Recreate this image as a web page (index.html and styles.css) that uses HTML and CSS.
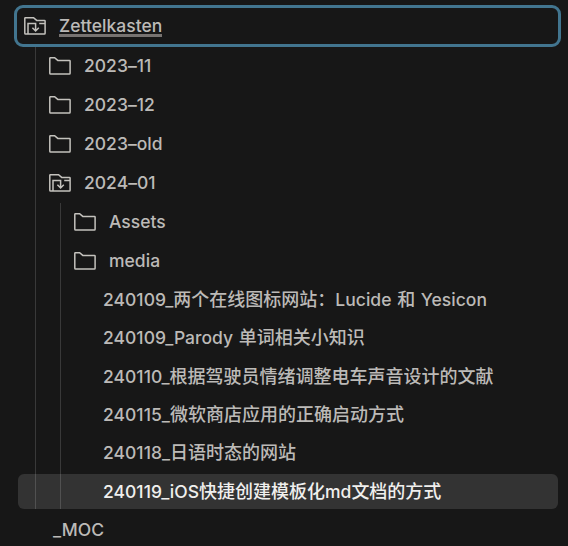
FILE: index.html
```html
<!DOCTYPE html>
<html lang="zh-CN">
<head>
<meta charset="utf-8">
<title>Zettelkasten</title>
<link rel="stylesheet" href="styles.css">
</head>
<body>
<svg class="defs" aria-hidden="true">
  <symbol id="folder" viewBox="0 0 22 18">
    <path d="M1.5.7H5.6L8.8 3.4H20.4Q21.1 3.4 21.1 4.1V16.3Q21.1 17.1 20.4 17.1H1.6Q.8 17.1.8 16.3V1.4Q.8.7 1.5.7Z"/>
  </symbol>
  <symbol id="folder-open" viewBox="0 0 22 18">
    <path d="M1.5.7H9.5L12.7 3.4H20.4Q21.1 3.4 21.1 4.1V16.3Q21.1 17.1 20.4 17.1H1.6Q.8 17.1.8 16.3V1.4Q.8.7 1.5.7ZM4 17V6.6H11.6V14M8.4 10.7L11.6 14L14.8 10.7M15.2 6.6H20.8"/>
  </symbol>
</svg>
<nav class="tree">
  <div class="row folder root"><svg class="icon"><use href="#folder-open"/></svg><span class="latin zettel">Zettelkasten</span></div>
  <div class="children">
    <div class="row folder"><svg class="icon"><use href="#folder"/></svg><span class="latin">2023–11</span></div>
    <div class="row folder"><svg class="icon"><use href="#folder"/></svg><span class="latin">2023–12</span></div>
    <div class="row folder"><svg class="icon"><use href="#folder"/></svg><span class="latin">2023–old</span></div>
    <div class="row folder"><svg class="icon"><use href="#folder-open"/></svg><span class="latin">2024–01</span></div>
    <div class="children nested">
      <div class="row folder"><svg class="icon"><use href="#folder"/></svg><span class="latin">Assets</span></div>
      <div class="row folder"><svg class="icon"><use href="#folder"/></svg><span class="latin">media</span></div>
      <div class="files">
        <div class="row file"><span class="latin">240109_</span>两个在线图标网站：<span class="latin">Lucide </span>和<span class="latin"> Yesicon</span></div>
        <div class="row file"><span class="latin">240109_Parody </span>单词相关小知识</div>
        <div class="row file"><span class="latin">240110_</span>根据驾驶员情绪调整电车声音设计的文献</div>
        <div class="row file"><span class="latin">240115_</span>微软商店应用的正确启动方式</div>
        <div class="row file"><span class="latin">240118_</span>日语时态的网站</div>
        <div class="row file selected"><span class="latin">240119_iOS</span>快捷创建模板化<span class="latin">md</span>文档的方式</div>
      </div>
    </div>
  </div>
  <div class="row moc"><span class="latin">_MOC</span></div>
</nav>
</body>
</html>
```
FILE: styles.css
```css
* { box-sizing: border-box; }
body {
  margin: 0;
  height: 546px;
  overflow: hidden;
  background: #171717;
  color: #bcbab7;
  font: 500 18px/36px "Liberation Sans", "Noto Sans CJK SC", sans-serif;
}
.defs { display: none; }
.latin {
  font-family: Inter, "Liberation Sans", sans-serif;
  font-size: 17.5px;
  font-weight: 450;
  letter-spacing: .02px;
  word-spacing: 1px;
}
.tree { padding: 5px 7px 0 14px; }
.row { height: 35px; white-space: pre; }
.folder { display: flex; align-items: center; height: 39px; padding-bottom: 2px; }
.icon {
  flex: none;
  width: 22px;
  height: 18px;
  margin-right: 13px;
  fill: none;
  stroke: #c4c2bd;
  stroke-width: 1.5;
}
.root {
  height: 42px;
  padding: 0 0 0 7px;
  border: 3px solid #42758f;
  border-radius: 9px;
}
.zettel {
  height: 21px;
  line-height: 20px;
  border-bottom: 3px solid #777371;
}
.children { margin-left: 21px; padding-left: 13px; border-left: 1px solid #393939; }
.nested { margin-left: 11px; }
.files { padding-top: 1px; }
.file { margin: 0 0 3.3px 29px; }
.selected {
  width: 540px;
  margin: 3.8px 0 0 -56px;
  padding-left: 85px;
  border-radius: 6px;
  background: rgba(255, 255, 255, .12);
  color: #f0efed;
}
.moc { margin: 3px 0 0 39px; }
```
